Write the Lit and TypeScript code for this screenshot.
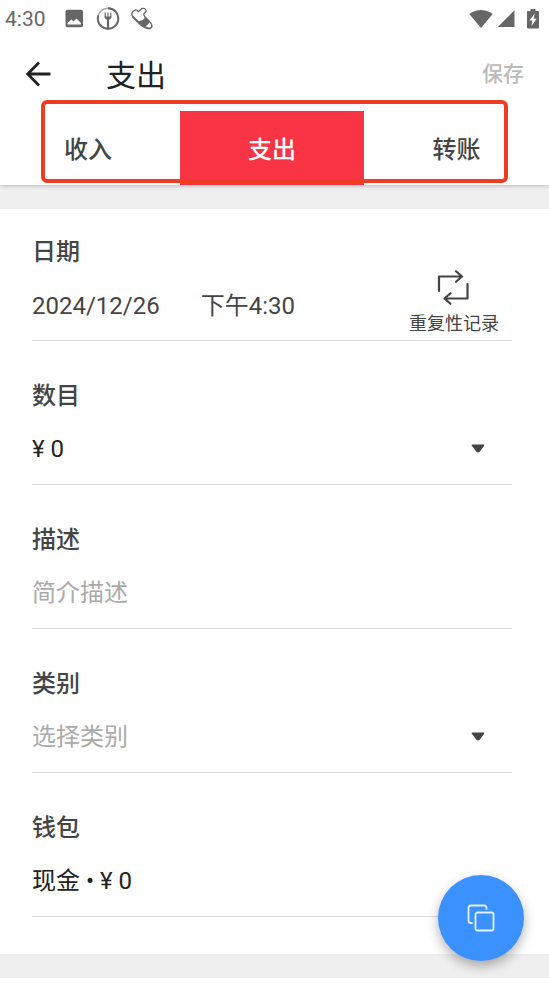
import { LitElement, html, css } from "lit";
import { customElement, state } from "lit/decorators.js";

const caret = html`<svg class="caret" width="14" height="9" viewBox="0 0 14 9" aria-hidden="true">
  <path d="M1.4 0.5H12.6Q14 0.5 13.1 1.8L9 7.2Q7 9.6 5 7.2L0.9 1.8Q0 0.5 1.4 0.5Z" fill="#444" />
</svg>`;

@customElement("status-bar")
class StatusBar extends LitElement {
  static styles = css`
    :host {
      display: flex;
      align-items: center;
      justify-content: space-between;
      height: 38px;
      padding: 0 10px 0 5px;
      color: #666;
      font-size: 21px;
    }
    .group { display: flex; align-items: center; }
    .time { width: 59px; }
    .photo { margin-right: 12px; }
    .meal { margin-right: 10px; }
    .wifi { margin-right: 4px; }
    .signal { margin-right: 12px; }
    svg { display: block; }
  `;
  render() {
    return html`
      <div class="group">
        <span class="time">4:30</span>
        <svg class="photo" width="20" height="20" viewBox="0 0 20 20">
          <rect x="1.5" y="0.8" width="17.5" height="17.5" rx="2" fill="#666" />
          <path d="M3.5 15.5V14L7.5 10.5L9.5 12.5L12.5 9.5L17 14V15.5Z" fill="#fff" />
        </svg>
        <svg class="meal" width="24" height="24" viewBox="0 0 24 24" fill="none" stroke="#666">
          <circle cx="12" cy="11.5" r="10.3" stroke="#aaa" stroke-width="1.6" />
          <path d="M12 1.2A10.3 10.3 0 1 1 2.2 8.5" stroke-width="1.9" />
          <path d="M9.2 5.5V10.5M12 5.5V11M14.8 5.5V10.5" stroke-width="1.2" />
          <path d="M8.6 9.5H15.4Q15.4 12.8 12 12.8Q8.6 12.8 8.6 9.5Z" fill="#666" stroke="none" />
          <path d="M12 12V21.5" stroke-width="2.2" />
        </svg>
        <svg width="24" height="24" viewBox="0 0 24 24" fill="none" stroke="#666" stroke-width="1.3" stroke-linejoin="round">
          <path d="M5.2 3Q7.4 2.6 8.2 4.8L12 1.4Q15.8 0.8 16.2 4.2L13.6 7.2Q14.2 10 16.6 11.6L20.8 16Q22.8 19 21.4 20.6Q19.4 22 16.4 20.2Q12 19 9.4 15.8L2.4 9Q1 6.6 2.8 4.6Z" />
          <path d="M9.6 14.6Q14 14 15.6 10.8L19 14.2Q17.8 18 13.8 18.8Z" fill="#666" />
          <path d="M2 9.4L9 16.6Q15.6 22.6 20.6 21.6" />
        </svg>
      </div>
      <div class="group">
        <svg class="wifi" width="24" height="19" viewBox="0 0 24 19">
          <path d="M12 18L0.3 3.9Q11.8-3.7 23.7 3.9Z" fill="#666" />
        </svg>
        <svg class="signal" width="18" height="18" viewBox="0 0 18 18">
          <path d="M17.5 0.3V17H0.7Z" fill="#666" />
        </svg>
        <svg width="12" height="20" viewBox="0 0 12 20">
          <path d="M3.5 0H8.5V2H11Q12 2 12 3V18.5Q12 19.5 11 19.5H1Q0 19.5 0 18.5V3Q0 2 1 2H3.5Z" fill="#666" />
          <path d="M7.6 4.5L2.6 11.5H5.4L4.5 17L9.6 9.7H6.9Z" fill="#fff" />
        </svg>
      </div>
    `;
  }
}

@customElement("app-root")
class AppRoot extends LitElement {
  @state() private active = 1;
  private tabs = ["收入", "支出", "转账"];

  static styles = css`
    :host {
      display: block;
      min-height: 100vh;
      background: #fff;
      color: #444;
      font-family: Roboto, "Noto Sans CJK SC", sans-serif;
      font-size: 24px;
    }
    *, *::before { box-sizing: border-box; }
    button, input, select {
      font: inherit;
      color: inherit;
      background: none;
      border: 0;
      border-radius: 0;
      margin: 0;
      padding: 0;
      outline: none;
    }
    button { cursor: pointer; }
    svg { display: block; }
    .top { position: relative; box-shadow: 0 1px 4px rgba(0, 0, 0, 0.22); }
    .bar {
      display: flex;
      align-items: center;
      height: 73px;
      padding: 0 25px 2px 24px;
    }
    .back { width: 82px; }
    .title {
      flex: 1;
      margin: 0;
      padding-top: 4px;
      color: #222;
      font-size: 30px;
      font-weight: 400;
      line-height: 48px;
    }
    .save { color: #bbb; font-size: 21px; font-weight: 500; line-height: 28px; }
    .tabs {
      position: relative;
      display: grid;
      grid-template-columns: 180fr 184fr 185fr;
      height: 74px;
    }
    .tab { padding-bottom: 2px; font-weight: 500; }
    .tab:first-child { padding-right: 4px; }
    .tab.on { background: #f93445; color: #fff; }
    .frame {
      position: absolute;
      inset: -11px 41px 2px;
      border: 4px solid #ee3d23;
      border-radius: 6px;
      pointer-events: none;
    }
    .band { height: 24px; background: #efefef; }
    .form {
      display: flex;
      flex-direction: column;
      gap: 36px;
      padding: 24px 37px 37px 32px;
    }
    .label { display: block; height: 36px; font-weight: 500; line-height: 38px; }
    .value {
      display: flex;
      align-items: center;
      height: 72px;
      border-bottom: 1px solid #ddd;
    }
    .when { display: flex; align-items: baseline; gap: 41px; padding-bottom: 2px; }
    .repeat {
      display: flex;
      flex-direction: column;
      align-items: center;
      gap: 4px;
      align-self: flex-end;
      margin: 0 13px 2px auto;
      font-size: 18px;
      line-height: 28px;
    }
    .text { flex: 1; min-width: 0; height: 48px; appearance: none; }
    .dark { color: #222; }
    .muted, .text::placeholder { color: #aaa; opacity: 1; }
    .caret { margin-right: 27px; pointer-events: none; }
    .fab {
      position: fixed;
      right: 25px;
      bottom: 22px;
      display: grid;
      place-items: center;
      width: 86px;
      height: 86px;
      border-radius: 50%;
      background: #3b92ff;
      box-shadow: 0 5px 12px rgba(0, 0, 0, 0.3);
    }
  `;

  render() {
    return html`
      <div class="top">
        <status-bar></status-bar>
        <header class="bar">
          <button class="back" aria-label="返回">
            <svg width="28" height="28" viewBox="0 0 28 28" fill="none" stroke="#222" stroke-width="2.8">
              <path d="M26.5 14H4M15 2.5L3.7 14L15 25.5" />
            </svg>
          </button>
          <h1 class="title">支出</h1>
          <button class="save">保存</button>
        </header>
        <nav class="tabs">
          ${this.tabs.map(
            (t, i) => html`<button class="tab ${i === this.active ? "on" : ""}" @click=${() => (this.active = i)}>${t}</button>`
          )}
          <div class="frame"></div>
        </nav>
      </div>
      <div class="band"></div>
      <main class="form">
        <section>
          <span class="label">日期</span>
          <div class="value">
            <div class="when">
              <button>2024/12/26</button>
              <button>下午4:30</button>
            </div>
            <button class="repeat">
              <svg width="34" height="36" viewBox="0 0 34 36" fill="none" stroke="#444" stroke-width="2.2" stroke-linecap="round" stroke-linejoin="round">
                <path d="M2 21V6.5H24.5M19 1.2L25 6.5L19 11.8" />
                <path d="M30.5 14V28.5H8M13.5 23.2L7.5 28.5L13.5 33.8" />
              </svg>
              <span>重复性记录</span>
            </button>
          </div>
        </section>
        <section>
          <label class="label" for="amount">数目</label>
          <div class="value">
            <input id="amount" class="text dark" value="¥ 0" />
            <button aria-label="货币">${caret}</button>
          </div>
        </section>
        <section>
          <label class="label" for="note">描述</label>
          <div class="value"><input id="note" class="text" placeholder="简介描述" /></div>
        </section>
        <section>
          <label class="label" for="category">类别</label>
          <div class="value">
            <select id="category" class="text muted"><option>选择类别</option></select>
            ${caret}
          </div>
        </section>
        <section>
          <label class="label" for="wallet">钱包</label>
          <div class="value">
            <select id="wallet" class="text dark"><option>现金 • ¥ 0</option></select>
          </div>
        </section>
      </main>
      <div class="band"></div>
      <button class="fab" aria-label="复制">
        <svg width="28" height="28" viewBox="0 0 28 28" fill="none" stroke="#e4efff" stroke-width="1.8" stroke-linecap="round">
          <rect x="8.5" y="8.5" width="18" height="18" rx="2" />
          <path d="M19.5 5V4Q19.5 1.5 17 1.5H4Q1.5 1.5 1.5 4V16.5Q1.5 19 4 19H5" />
        </svg>
      </button>
    `;
  }
}
